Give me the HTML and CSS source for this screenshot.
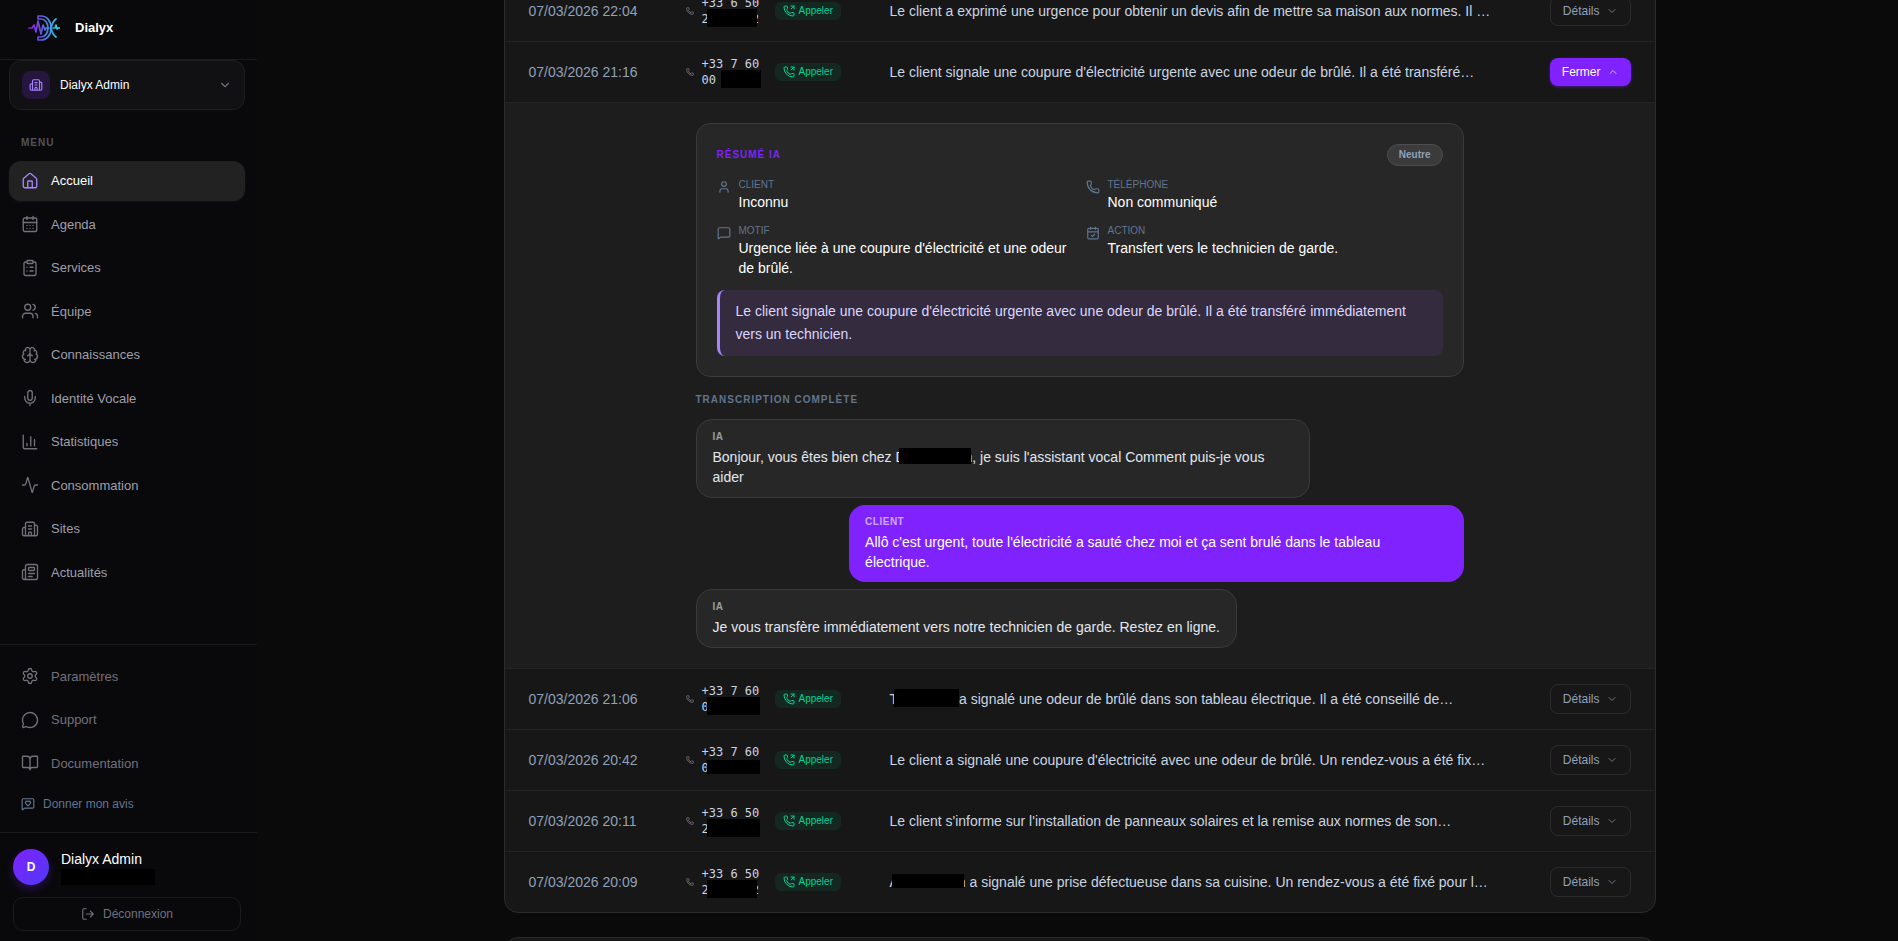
FILE: index.html
```html
<!DOCTYPE html>
<html lang="fr">
<head>
    <meta charset="UTF-8">
    <meta name="viewport" content="width=device-width, initial-scale=1.0">
    <title>Dialyx</title>
    <link rel="stylesheet" href="styles.css">
</head>
<body>
    <!-- Icônes -->
    <svg class="sprite" aria-hidden="true">
        <symbol id="home" viewBox="0 0 24 24"><path d="M15 21v-8a1 1 0 0 0-1-1h-4a1 1 0 0 0-1 1v8"/><path d="M3 10a2 2 0 0 1 .709-1.528l7-6a2 2 0 0 1 2.582 0l7 6A2 2 0 0 1 21 10v9a2 2 0 0 1-2 2H5a2 2 0 0 1-2-2z"/></symbol>
        <symbol id="calendar" viewBox="0 0 24 24"><path d="M8 2v4M16 2v4M3 10h18M8 14h.01M12 14h.01M16 14h.01M8 18h.01M12 18h.01M16 18h.01"/><rect width="18" height="18" x="3" y="4" rx="2"/></symbol>
        <symbol id="clipboard" viewBox="0 0 24 24"><rect width="8" height="4" x="8" y="2" rx="1"/><path d="M16 4h2a2 2 0 0 1 2 2v14a2 2 0 0 1-2 2H6a2 2 0 0 1-2-2V6a2 2 0 0 1 2-2h2M12 11h4M12 16h4M8 11h.01M8 16h.01"/></symbol>
        <symbol id="users" viewBox="0 0 24 24"><path d="M16 21v-2a4 4 0 0 0-4-4H6a4 4 0 0 0-4 4v2M16 3.128a4 4 0 0 1 0 7.744M22 21v-2a4 4 0 0 0-3-3.87"/><circle cx="9" cy="7" r="4"/></symbol>
        <symbol id="brain" viewBox="0 0 24 24"><path d="M12 18V5M15 13a4.17 4.17 0 0 1-3-4 4.17 4.17 0 0 1-3 4M17.598 6.5A3 3 0 1 0 12 5a3 3 0 1 0-5.598 1.5M17.997 5.125a4 4 0 0 1 2.526 5.77M18 18a4 4 0 0 0 2-7.464M19.967 17.483A4 4 0 1 1 12 18a4 4 0 1 1-7.967-.517M6 18a4 4 0 0 1-2-7.464M6.003 5.125a4 4 0 0 0-2.526 5.77"/></symbol>
        <symbol id="mic" viewBox="0 0 24 24"><path d="M12 19v3M19 10v2a7 7 0 0 1-14 0v-2"/><rect x="9" y="2" width="6" height="13" rx="3"/></symbol>
        <symbol id="chart" viewBox="0 0 24 24"><path d="M3 3v16a2 2 0 0 0 2 2h16M18 17V9M13 17V5M8 17v-3"/></symbol>
        <symbol id="activity" viewBox="0 0 24 24"><path d="M22 12h-2.48a2 2 0 0 0-1.93 1.46l-2.35 8.36a.25.25 0 0 1-.48 0L9.24 2.18a.25.25 0 0 0-.48 0l-2.35 8.36A2 2 0 0 1 4.49 12H2"/></symbol>
        <symbol id="building" viewBox="0 0 24 24"><path d="M10 12h4M10 8h4M14 21v-3a2 2 0 0 0-4 0v3M6 10H4a2 2 0 0 0-2 2v7a2 2 0 0 0 2 2h16a2 2 0 0 0 2-2V9a2 2 0 0 0-2-2h-2M6 21V5a2 2 0 0 1 2-2h8a2 2 0 0 1 2 2v16"/></symbol>
        <symbol id="news" viewBox="0 0 24 24"><path d="M15 18h-5M18 14h-8M4 22h16a2 2 0 0 0 2-2V4a2 2 0 0 0-2-2H8a2 2 0 0 0-2 2v16a2 2 0 0 1-4 0v-9a2 2 0 0 1 2-2h2"/><rect width="8" height="4" x="10" y="6" rx="1"/></symbol>
        <symbol id="settings" viewBox="0 0 24 24"><path d="M9.671 4.136a2.34 2.34 0 0 1 4.659 0 2.34 2.34 0 0 0 3.319 1.915 2.34 2.34 0 0 1 2.33 4.033 2.34 2.34 0 0 0 0 3.831 2.34 2.34 0 0 1-2.33 4.033 2.34 2.34 0 0 0-3.319 1.915 2.34 2.34 0 0 1-4.659 0 2.34 2.34 0 0 0-3.32-1.915 2.34 2.34 0 0 1-2.33-4.033 2.34 2.34 0 0 0 0-3.831A2.34 2.34 0 0 1 6.35 6.051a2.34 2.34 0 0 0 3.319-1.915"/><circle cx="12" cy="12" r="3"/></symbol>
        <symbol id="support" viewBox="0 0 24 24"><path d="M2.992 16.342a2 2 0 0 1 .094 1.167l-1.065 3.29a1 1 0 0 0 1.236 1.168l3.413-.998a2 2 0 0 1 1.099.092 10 10 0 1 0-4.777-4.719"/></symbol>
        <symbol id="book" viewBox="0 0 24 24"><path d="M12 7v14M3 18a1 1 0 0 1-1-1V4a1 1 0 0 1 1-1h5a4 4 0 0 1 4 4 4 4 0 0 1 4-4h5a1 1 0 0 1 1 1v13a1 1 0 0 1-1 1h-6a3 3 0 0 0-3 3 3 3 0 0 0-3-3z"/></symbol>
        <symbol id="message" viewBox="0 0 24 24"><path d="M22 17a2 2 0 0 1-2 2H6.828a2 2 0 0 0-1.414.586l-2.202 2.202A.71.71 0 0 1 2 21.286V5a2 2 0 0 1 2-2h16a2 2 0 0 1 2 2z"/></symbol>
        <symbol id="heart" viewBox="0 0 24 24"><path d="M22 17a2 2 0 0 1-2 2H6.828a2 2 0 0 0-1.414.586l-2.202 2.202A.71.71 0 0 1 2 21.286V5a2 2 0 0 1 2-2h16a2 2 0 0 1 2 2z"/><path d="M7.5 9.5c0 .687.265 1.383.697 1.844l3.009 3.264a1.14 1.14 0 0 0 1.588 0l3.008-3.264A2.77 2.77 0 0 0 16.5 9.5 2.5 2.5 0 0 0 12 8a2.5 2.5 0 0 0-4.5 1.5"/></symbol>
        <symbol id="logout" viewBox="0 0 24 24"><path d="m16 17 5-5-5-5M21 12H9M9 21H5a2 2 0 0 1-2-2V5a2 2 0 0 1 2-2h4"/></symbol>
        <symbol id="user" viewBox="0 0 24 24"><path d="M19 21v-2a4 4 0 0 0-4-4H9a4 4 0 0 0-4 4v2"/><circle cx="12" cy="7" r="4"/></symbol>
        <symbol id="phone" viewBox="0 0 24 24"><path d="M13.832 16.568a1 1 0 0 0 1.213-.303l.355-.465A2 2 0 0 1 17 15h3a2 2 0 0 1 2 2v3a2 2 0 0 1-2 2A18 18 0 0 1 2 4a2 2 0 0 1 2-2h3a2 2 0 0 1 2 2v3a2 2 0 0 1-.8 1.6l-.468.351a1 1 0 0 0-.292 1.233 14 14 0 0 0 6.392 6.384"/></symbol>
        <symbol id="call" viewBox="0 0 24 24"><path d="m16 8 6-6M22 8V2h-6"/><path d="M13.832 16.568a1 1 0 0 0 1.213-.303l.355-.465A2 2 0 0 1 17 15h3a2 2 0 0 1 2 2v3a2 2 0 0 1-2 2A18 18 0 0 1 2 4a2 2 0 0 1 2-2h3a2 2 0 0 1 2 2v3a2 2 0 0 1-.8 1.6l-.468.351a1 1 0 0 0-.292 1.233 14 14 0 0 0 6.392 6.384"/></symbol>
        <symbol id="check" viewBox="0 0 24 24"><path d="M8 2v4M16 2v4M3 10h18M9 16l2 2 4-4"/><rect width="18" height="18" x="3" y="4" rx="2"/></symbol>
        <symbol id="down" viewBox="0 0 24 24"><path d="m6 9 6 6 6-6"/></symbol>
        <symbol id="up" viewBox="0 0 24 24"><path d="m18 15-6-6-6 6"/></symbol>
    </svg>

    <div class="layout">
        <aside class="sidebar">
            <header class="brand">
                <svg class="logo" viewBox="0 0 32 26" aria-hidden="true">
                    <defs>
                        <linearGradient id="logo-gradient" gradientUnits="userSpaceOnUse" x1="0" y1="0" x2="32" y2="0">
                            <stop offset="0" stop-color="#9810d8"/>
                            <stop offset=".45" stop-color="#5b5fe0"/>
                            <stop offset="1" stop-color="#22e0e6"/>
                        </linearGradient>
                    </defs>
                    <g fill="none" stroke="url(#logo-gradient)" stroke-width="1.7" stroke-linejoin="round" stroke-linecap="round">
                        <path d="M1 13h3l2-3 2 7 2-11 3 13 2-9 2 5 1-2h3"/>
                        <path d="M10 4V1h3c6 0 10 5 10 12s-4 12-10 12h-3v-3h3c4 0 7-4 7-9s-3-9-7-9z"/>
                        <path d="M28 4c-3 2-4 5-5 9 1 4 2 7 5 9M25 13h2l1-3 1 4 1-1h2"/>
                    </g>
                </svg>
                <span>Dialyx</span>
            </header>

            <button class="org" type="button">
                <span class="org-icon"><svg class="icon icon-small"><use href="#building"/></svg></span>
                <span class="org-name">Dialyx Admin</span>
                <svg class="icon icon-small"><use href="#down"/></svg>
            </button>

            <nav class="menu" aria-label="Menu">
                <p class="menu-title">MENU</p>
                <a class="menu-link active" href="#"><svg class="icon"><use href="#home"/></svg>Accueil</a>
                <a class="menu-link" href="#"><svg class="icon"><use href="#calendar"/></svg>Agenda</a>
                <a class="menu-link" href="#"><svg class="icon"><use href="#clipboard"/></svg>Services</a>
                <a class="menu-link" href="#"><svg class="icon"><use href="#users"/></svg>Équipe</a>
                <a class="menu-link" href="#"><svg class="icon"><use href="#brain"/></svg>Connaissances</a>
                <a class="menu-link" href="#"><svg class="icon"><use href="#mic"/></svg>Identité Vocale</a>
                <a class="menu-link" href="#"><svg class="icon"><use href="#chart"/></svg>Statistiques</a>
                <a class="menu-link" href="#"><svg class="icon"><use href="#activity"/></svg>Consommation</a>
                <a class="menu-link" href="#"><svg class="icon"><use href="#building"/></svg>Sites</a>
                <a class="menu-link" href="#"><svg class="icon"><use href="#news"/></svg>Actualités</a>
            </nav>

            <nav class="menu menu-secondary" aria-label="Aide">
                <a class="menu-link" href="#"><svg class="icon"><use href="#settings"/></svg>Paramètres</a>
                <a class="menu-link" href="#"><svg class="icon"><use href="#support"/></svg>Support</a>
                <a class="menu-link" href="#"><svg class="icon"><use href="#book"/></svg>Documentation</a>
                <button class="feedback" type="button"><svg class="icon icon-small"><use href="#heart"/></svg>Donner mon avis</button>
            </nav>

            <footer class="account">
                <div class="account-user">
                    <span class="avatar">D</span>
                    <div>
                        <p class="account-name">Dialyx Admin</p>
                        <p class="account-mail"><span class="mask mask-mail"></span></p>
                    </div>
                </div>
                <button class="logout" type="button"><svg class="icon icon-small"><use href="#logout"/></svg>Déconnexion</button>
            </footer>
        </aside>

        <main class="content">
            <section class="card">
                <table class="calls">
                    <colgroup>
                        <col class="col-date">
                        <col class="col-phone">
                        <col>
                        <col class="col-action">
                    </colgroup>
                    <tbody>
                        <tr>
                            <td class="date">07/03/2026 22:04</td>
                            <td>
                                <div class="caller">
                                    <svg class="icon icon-tiny"><use href="#phone"/></svg>
                                    <span class="number">+33 6 50 2<span class="mask mask-phone"></span>2</span>
                                    <a class="call" href="#"><svg class="icon"><use href="#call"/></svg>Appeler</a>
                                </div>
                            </td>
                            <td class="summary">Le client a exprimé une urgence pour obtenir un devis afin de mettre sa maison aux normes. Il …</td>
                            <td class="action"><button class="toggle" type="button">Détails<svg class="icon"><use href="#down"/></svg></button></td>
                        </tr>
                        <tr>
                            <td class="date">07/03/2026 21:16</td>
                            <td>
                                <div class="caller">
                                    <svg class="icon icon-tiny"><use href="#phone"/></svg>
                                    <span class="number">+33 7 60 00&nbsp;<span class="mask mask-phone-short"></span></span>
                                    <a class="call" href="#"><svg class="icon"><use href="#call"/></svg>Appeler</a>
                                </div>
                            </td>
                            <td class="summary">Le client signale une coupure d'électricité urgente avec une odeur de brûlé. Il a été transféré…</td>
                            <td class="action"><button class="toggle open" type="button">Fermer<svg class="icon"><use href="#up"/></svg></button></td>
                        </tr>
                        <tr class="detail-row">
                            <td colspan="4">
                                <div class="detail">
                                    <article class="resume">
                                        <header class="resume-head">
                                            <h2>RÉSUMÉ IA</h2>
                                            <span class="mood">Neutre</span>
                                        </header>
                                        <div class="facts">
                                            <div class="fact">
                                                <svg class="icon icon-small"><use href="#user"/></svg>
                                                <div>
                                                    <p class="fact-label">CLIENT</p>
                                                    <p class="fact-value">Inconnu</p>
                                                </div>
                                            </div>
                                            <div class="fact">
                                                <svg class="icon icon-small"><use href="#phone"/></svg>
                                                <div>
                                                    <p class="fact-label">TÉLÉPHONE</p>
                                                    <p class="fact-value">Non communiqué</p>
                                                </div>
                                            </div>
                                            <div class="fact">
                                                <svg class="icon icon-small"><use href="#message"/></svg>
                                                <div>
                                                    <p class="fact-label">MOTIF</p>
                                                    <p class="fact-value">Urgence liée à une coupure d'électricité et une odeur de brûlé.</p>
                                                </div>
                                            </div>
                                            <div class="fact">
                                                <svg class="icon icon-small"><use href="#check"/></svg>
                                                <div>
                                                    <p class="fact-label">ACTION</p>
                                                    <p class="fact-value">Transfert vers le technicien de garde.</p>
                                                </div>
                                            </div>
                                        </div>
                                        <blockquote class="quote">Le client signale une coupure d'électricité urgente avec une odeur de brûlé. Il a été transféré immédiatement vers un technicien.</blockquote>
                                    </article>

                                    <h3 class="transcript-title">TRANSCRIPTION COMPLÈTE</h3>
                                    <div class="transcript">
                                        <div class="bubble">
                                            <p class="speaker">IA</p>
                                            <p>Bonjour, vous êtes bien chez D<span class="mask mask-company"></span>n, je suis l'assistant vocal Comment puis-je vous aider</p>
                                        </div>
                                        <div class="bubble bubble-client">
                                            <p class="speaker">CLIENT</p>
                                            <p>Allô c'est urgent, toute l'électricité a sauté chez moi et ça sent brulé dans le tableau électrique.</p>
                                        </div>
                                        <div class="bubble">
                                            <p class="speaker">IA</p>
                                            <p>Je vous transfère immédiatement vers notre technicien de garde. Restez en ligne.</p>
                                        </div>
                                    </div>
                                </div>
                            </td>
                        </tr>
                        <tr>
                            <td class="date">07/03/2026 21:06</td>
                            <td>
                                <div class="caller">
                                    <svg class="icon icon-tiny"><use href="#phone"/></svg>
                                    <span class="number">+33 7 60 0<span class="mask mask-phone-long"></span></span>
                                    <a class="call" href="#"><svg class="icon"><use href="#call"/></svg>Appeler</a>
                                </div>
                            </td>
                            <td class="summary">T<span class="mask mask-name"></span>a signalé une odeur de brûlé dans son tableau électrique. Il a été conseillé de…</td>
                            <td class="action"><button class="toggle" type="button">Détails<svg class="icon"><use href="#down"/></svg></button></td>
                        </tr>
                        <tr>
                            <td class="date">07/03/2026 20:42</td>
                            <td>
                                <div class="caller">
                                    <svg class="icon icon-tiny"><use href="#phone"/></svg>
                                    <span class="number">+33 7 60 0<span class="mask mask-phone-long mask-thin"></span></span>
                                    <a class="call" href="#"><svg class="icon"><use href="#call"/></svg>Appeler</a>
                                </div>
                            </td>
                            <td class="summary">Le client a signalé une coupure d'électricité avec une odeur de brûlé. Un rendez-vous a été fix…</td>
                            <td class="action"><button class="toggle" type="button">Détails<svg class="icon"><use href="#down"/></svg></button></td>
                        </tr>
                        <tr>
                            <td class="date">07/03/2026 20:11</td>
                            <td>
                                <div class="caller">
                                    <svg class="icon icon-tiny"><use href="#phone"/></svg>
                                    <span class="number">+33 6 50 2<span class="mask mask-phone-long"></span></span>
                                    <a class="call" href="#"><svg class="icon"><use href="#call"/></svg>Appeler</a>
                                </div>
                            </td>
                            <td class="summary">Le client s'informe sur l'installation de panneaux solaires et la remise aux normes de son…</td>
                            <td class="action"><button class="toggle" type="button">Détails<svg class="icon"><use href="#down"/></svg></button></td>
                        </tr>
                        <tr>
                            <td class="date">07/03/2026 20:09</td>
                            <td>
                                <div class="caller">
                                    <svg class="icon icon-tiny"><use href="#phone"/></svg>
                                    <span class="number">+33 6 50 2<span class="mask mask-phone"></span>2</span>
                                    <a class="call" href="#"><svg class="icon"><use href="#call"/></svg>Appeler</a>
                                </div>
                            </td>
                            <td class="summary">A<span class="mask mask-name-long mask-thin"></span>n a signalé une prise défectueuse dans sa cuisine. Un rendez-vous a été fixé pour l…</td>
                            <td class="action"><button class="toggle" type="button">Détails<svg class="icon"><use href="#down"/></svg></button></td>
                        </tr>
                    </tbody>
                </table>
            </section>
            <section class="card card-next"></section>
        </main>
    </div>
</body>
</html>
```

FILE: styles.css
```css
* {
    box-sizing: border-box;
}
body {
    margin: 0;
    background-color: #0a0a0a;
    color: #fff;
    font-family: "Liberation Sans", Arial, sans-serif;
    font-size: 14px;
    line-height: 20px;
}
p, h2, h3, blockquote {
    margin: 0;
}
a {
    color: inherit;
    text-decoration: none;
}
button {
    font-family: inherit;
    background: none;
    border: none;
    padding: 0;
    cursor: pointer;
}
.sprite {
    display: none;
}
.icon {
    width: 18px;
    height: 18px;
    flex-shrink: 0;
    fill: none;
    stroke: currentColor;
    stroke-width: 2;
    stroke-linecap: round;
    stroke-linejoin: round;
}
.icon-small {
    width: 14px;
    height: 14px;
}
.icon-tiny {
    width: 8px;
    height: 8px;
    stroke-width: 3;
}
.layout {
    display: flex;
    height: 100vh;
    overflow: hidden;
}

/* Barre latérale */
.sidebar {
    display: flex;
    flex-direction: column;
    width: 257px;
    margin-right: 4px;
    flex-shrink: 0;
    background-color: #09090b;
}
.brand {
    display: flex;
    align-items: center;
    gap: 15px;
    height: 60px;
    padding: 0 28px 4px;
    border-bottom: 1px solid #1b1b1d;
    flex-shrink: 0;
    font-size: 13px;
    font-weight: bold;
}
.logo {
    width: 32px;
    height: 26px;
}
.org {
    display: flex;
    align-items: center;
    gap: 10px;
    height: 50px;
    flex-shrink: 0;
    margin: 0 12px 0 9px;
    padding: 0 12px;
    border: 1px solid #1f1f21;
    border-radius: 12px;
    background-color: #111113;
    color: #71717b;
    font-size: 12px;
}
.org-icon {
    display: flex;
    align-items: center;
    justify-content: center;
    width: 28px;
    height: 28px;
    border-radius: 8px;
    background-color: #25153f;
    color: #a684ff;
}
.org-name {
    flex: 1;
    text-align: left;
    color: #fff;
}
.menu {
    display: flex;
    flex-direction: column;
    gap: 4px;
    padding: 23px 12px 11px 9px;
}
.menu-title {
    padding: 0 12px;
    margin-bottom: 4px;
    color: #52525c;
    font-size: 10px;
    font-weight: bold;
    letter-spacing: 1px;
}
.menu-link {
    display: flex;
    align-items: center;
    gap: 12px;
    padding: 10px 12px;
    border-radius: 12px;
    color: #9f9fa9;
    font-size: 13px;
    line-height: 1.5;
}
.menu-link .icon {
    color: #71717b;
    stroke-width: 1.8;
}
.active {
    background-color: #222;
    color: #fff;
    box-shadow: 0 1px 3px rgba(255, 255, 255, 0.05);
}
.active .icon {
    color: #a684ff;
}
.menu-secondary {
    margin-top: auto;
    padding-top: 12px;
    border-top: 1px solid #1b1b1d;
}
.menu-secondary .menu-link {
    color: #71717b;
}
.feedback {
    display: flex;
    align-items: center;
    gap: 8px;
    padding: 8px 12px;
    color: #62748e;
    font-size: 12px;
    line-height: 18px;
}
.account {
    padding: 16px 16px 10px 13px;
    border-top: 1px solid #1b1b1d;
}
.account-user {
    display: flex;
    align-items: center;
    gap: 12px;
    margin-bottom: 12px;
}
.avatar {
    display: flex;
    align-items: center;
    justify-content: center;
    width: 36px;
    height: 36px;
    border-radius: 50%;
    background: linear-gradient(135deg, #7f22fe, #4f39f6);
    box-shadow: 0 4px 10px rgba(127, 34, 254, 0.25);
    font-size: 12px;
    font-weight: bold;
}
.account-mail {
    font-size: 11px;
    line-height: 16px;
}
.logout {
    display: flex;
    align-items: center;
    justify-content: center;
    gap: 8px;
    width: 100%;
    height: 34px;
    border: 1px solid #1b1b1d;
    border-radius: 10px;
    color: #71717b;
    font-size: 12px;
}

/* Zone principale */
.content {
    flex: 1;
    min-width: 0;
    padding: 0 24px;
}
.card {
    max-width: 1152px;
    margin: -20px auto 24px;
    border: 1px solid #2b2b2b;
    border-radius: 14px;
    background-color: #171717;
    overflow: hidden;
}
.card-next {
    height: 200px;
    margin-top: 0;
}
.calls {
    width: 100%;
    table-layout: fixed;
    border-collapse: separate;
    border-spacing: 0;
}
.col-date {
    width: 157px;
}
.col-phone {
    width: 204px;
}
.col-action {
    width: 130px;
}
.calls td {
    padding: 14px 24px;
    border-bottom: 1px solid #242424;
}
.calls tr:last-child td {
    border-bottom: none;
}
.calls .date {
    padding-right: 0;
    color: #90a1b9;
    white-space: nowrap;
}
.calls .summary {
    padding-right: 0;
    color: #cad5e2;
    white-space: nowrap;
    overflow: hidden;
}
.caller {
    display: flex;
    align-items: center;
    gap: 8px;
    color: #6a6a72;
}
.number {
    width: 65px;
    flex-shrink: 0;
    color: #cad5e2;
    font-family: "DejaVu Sans Mono", monospace;
    font-size: 12px;
    line-height: 16px;
}
.call {
    display: flex;
    align-items: center;
    gap: 4px;
    height: 18px;
    padding: 0 8px;
    border-radius: 6px;
    background-color: #152721;
    color: #00d492;
    font-size: 10px;
}
.call .icon {
    width: 12px;
    height: 12px;
}
.calls .action {
    padding-top: 0;
    padding-bottom: 0;
}
.toggle {
    display: flex;
    align-items: center;
    gap: 6px;
    margin-left: auto;
    height: 30px;
    padding: 0 12px;
    border: 1px solid #2b2b2b;
    border-radius: 8px;
    color: #90a1b9;
    font-size: 12px;
}
.toggle .icon {
    width: 12px;
    height: 12px;
    opacity: 0.7;
}
.open {
    height: 28px;
    border: none;
    background-color: #7f22fe;
    box-shadow: 0 1px 3px rgba(127, 34, 254, 0.5);
    color: #fff;
}

/* Détail d'un appel */
.calls .detail-row td {
    padding: 20px 24px;
    background-color: #1d1d1d;
}
.detail {
    max-width: 768px;
    margin: 0 auto;
}
.resume {
    padding: 20px;
    border: 1px solid #3a3a3a;
    border-radius: 14px;
    background-color: #272727;
}
.resume-head {
    display: flex;
    align-items: center;
    justify-content: space-between;
    margin-bottom: 12px;
}
.resume-head h2 {
    color: #7f22fe;
    font-size: 10px;
    letter-spacing: 1px;
}
.mood {
    height: 22px;
    padding: 0 11px;
    border: 1px solid #4d4d4d;
    border-radius: 11px;
    background-color: #3b3b3b;
    color: #90a1b9;
    font-size: 10px;
    font-weight: bold;
}
.facts {
    display: grid;
    grid-template-columns: 1fr 1fr;
    gap: 12px;
}
.fact {
    display: flex;
    gap: 8px;
}
.fact .icon {
    margin-top: 2px;
    color: #62748e;
}
.fact-label {
    color: #62748e;
    font-size: 10px;
    line-height: 14px;
}
.quote {
    margin-top: 12px;
    padding: 10px 16px;
    border-left: 3px solid #a684ff;
    border-radius: 8px;
    background-color: #342b3e;
    color: #ddd6ff;
    line-height: 23px;
}
.transcript-title {
    margin: 15px 0 12px;
    color: #62748e;
    font-size: 10px;
    line-height: 15px;
    letter-spacing: 1px;
}
.transcript {
    display: flex;
    flex-direction: column;
    align-items: flex-start;
    gap: 7px;
}
.bubble {
    max-width: 80%;
    padding: 10px 16px;
    border: 1px solid #3a3a3a;
    border-radius: 16px;
    background-color: #272727;
    color: #e2e8f0;
}
.bubble-client {
    align-self: flex-end;
    border: none;
    background-color: #7f22fe;
    color: #fff;
}
.speaker {
    margin-bottom: 3px;
    font-size: 10px;
    font-weight: bold;
    line-height: 14px;
    letter-spacing: 0.5px;
    opacity: 0.6;
}

/* Données masquées, le cache recouvre les lettres voisines */
.mask {
    display: inline-block;
    position: relative;
    z-index: 1;
    height: 18px;
    margin: -6px 0 -2px;
    vertical-align: middle;
    background-color: #000;
}
.mask-thin {
    height: 14px;
}
.mask-phone {
    width: 50px;
    margin-left: -2px;
    margin-right: -5px;
}
.mask-phone-long {
    width: 53px;
    margin-left: -2px;
}
.mask-phone-short {
    width: 40px;
    margin-left: -2px;
    margin-right: -20px;
}
.mask-name {
    width: 65px;
    margin-left: -4px;
}
.mask-name-long {
    width: 72px;
    margin-left: -7px;
    margin-right: -6px;
}
.mask-company {
    width: 72px;
    height: 16px;
    margin-left: -7px;
    margin-right: -6px;
}
.mask-mail {
    width: 94px;
    height: 16px;
    margin: 0;
    vertical-align: top;
}
```
